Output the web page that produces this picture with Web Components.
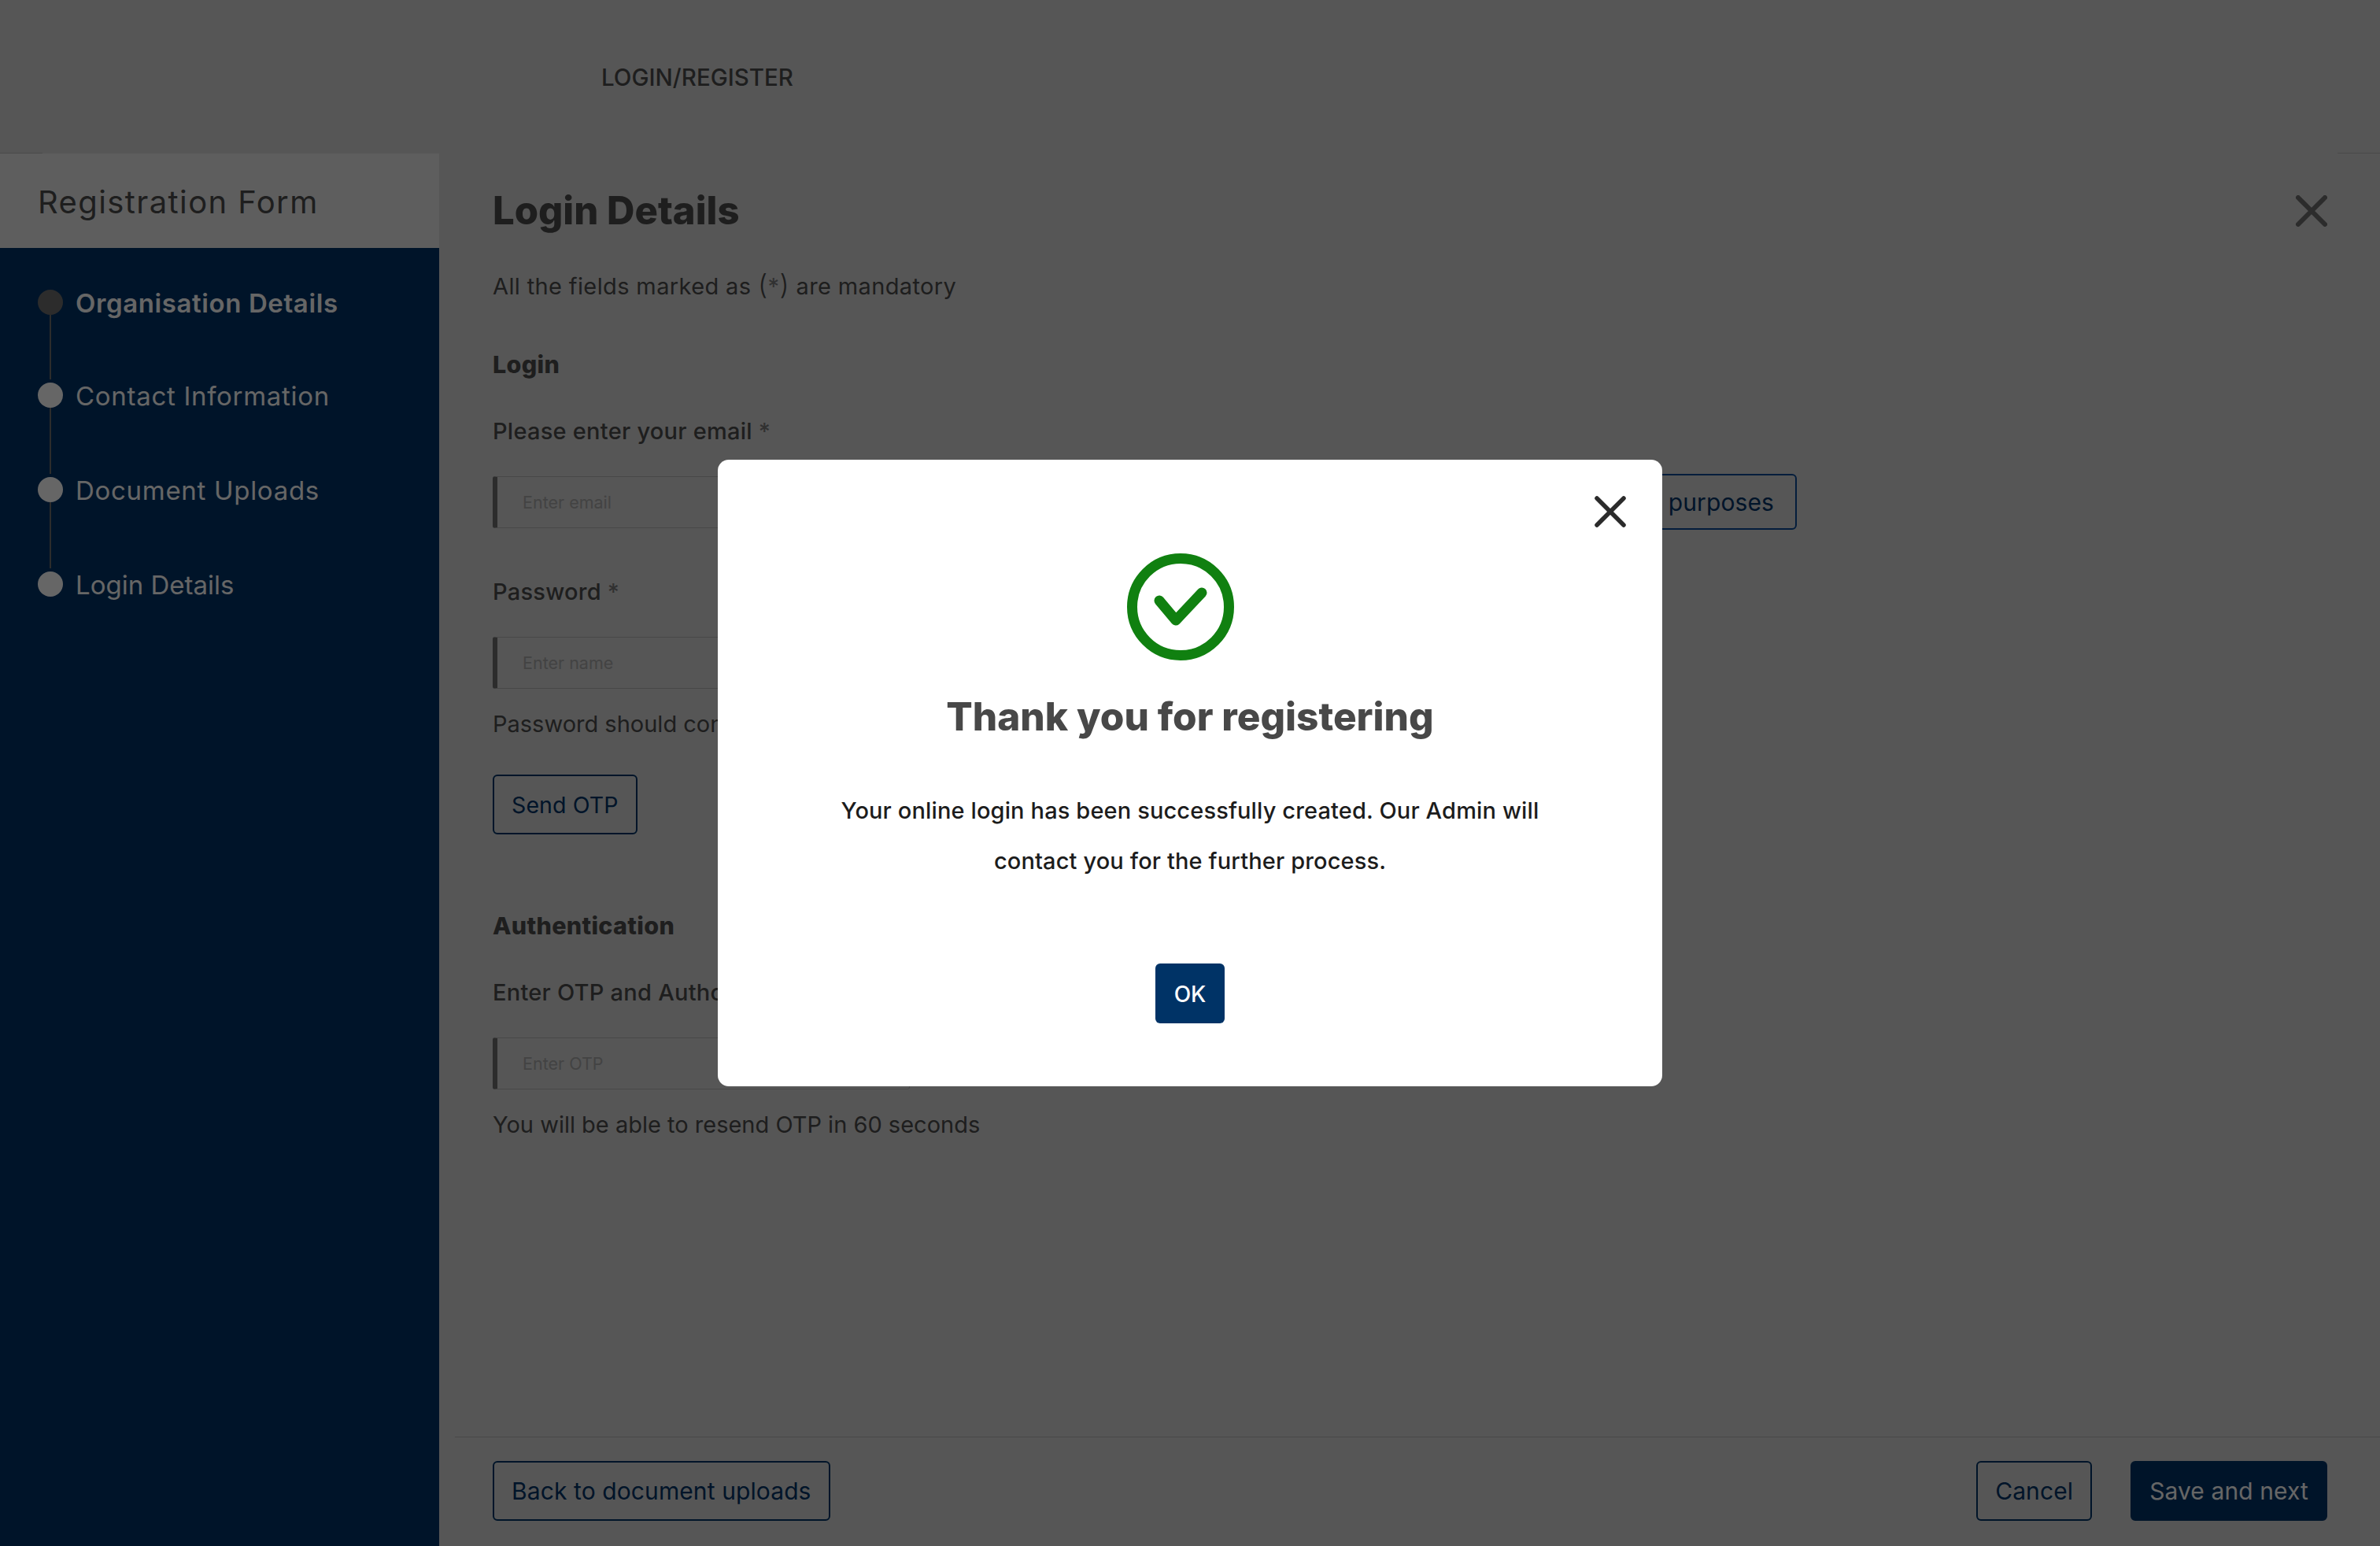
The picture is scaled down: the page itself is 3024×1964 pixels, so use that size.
<!DOCTYPE html>
<html lang="en">
<head>
<meta charset="utf-8">
<title>Registration Form</title>
<style>
  html, body { margin: 0; height: 100%; background: #d6d6d6; }
  body { font-family: "Inter", "Liberation Sans", sans-serif; color: #4c4c4c; overflow: hidden; }
</style>
</head>
<body>
<registration-page></registration-page>

<script>
const FONT = `"Inter", "Liberation Sans", sans-serif`;

class AppHeader extends HTMLElement {
    constructor() {
        super();
        this.attachShadow({ mode: 'open' }).innerHTML = `
        <style>
            :host {
                display: flex;
                align-items: center;
                box-sizing: border-box;
                height: 195px;
                padding: 0 0 0 764px;
                background: linear-gradient(to right, #b9b9b9 54px, transparent 54px, transparent 2970px, #b9b9b9 2970px) bottom / 100% 1px no-repeat;
                font: 500 29.5px ${FONT};
                color: #4c4c4c;
            }
        </style>
        <slot></slot>`;
    }
}

class SideStep extends HTMLElement {
    constructor() {
        super();
        this.attachShadow({ mode: 'open' }).innerHTML = `
        <style>
            :host {
                display: grid;
                grid-template-columns: 32px 1fr;
                column-gap: 16px;
                height: 120px;
                font: 400 33px/32px ${FONT};
                letter-spacing: 0.7px;
                color: #fff;
            }
            :host(:first-of-type) { height: 118px; }
            :host(:last-of-type) { letter-spacing: 0; }
            :host([active]) { font-weight: 600; letter-spacing: 0.6px; }
            .marker { display: flex; flex-direction: column; align-items: center; }
            .dot { width: 32px; height: 32px; flex: none; border-radius: 50%; background: #fff; }
            :host([active]) .dot { background: #6e6e6e; }
            .line { width: 2px; flex: 1; margin-bottom: 4px; background: #6e6e6e; }
            :host(:last-of-type) .line { display: none; }
            .text { padding-top: 1px; }
        </style>
        <div class="marker"><div class="dot"></div><div class="line"></div></div>
        <div class="text"><slot></slot></div>`;
    }
}

class SideNav extends HTMLElement {
    constructor() {
        super();
        this.attachShadow({ mode: 'open' }).innerHTML = `
        <style>
            :host {
                display: flex;
                flex-direction: column;
                flex: none;
                width: 558px;
                background: #003366;
            }
            .head {
                display: flex;
                align-items: center;
                box-sizing: border-box;
                height: 120px;
                padding: 2px 0 0 48px;
                background: #ececec;
                font: 400 40px ${FONT};
                letter-spacing: 1.4px;
                color: #4c4c4c;
            }
            .steps { padding: 53px 48px 0; }
        </style>
        <div class="head">Registration Form</div>
        <div class="steps"><slot></slot></div>`;
    }
}

class AppButton extends HTMLElement {
    constructor() {
        super();
        this.attachShadow({ mode: 'open' }).innerHTML = `
        <style>
            :host {
                display: inline-flex;
                align-items: center;
                justify-content: center;
                box-sizing: border-box;
                height: 76px;
                padding: 0 22px;
                border: 2px solid #003366;
                border-radius: 6px;
                font: 400 30px ${FONT};
                letter-spacing: 0.1px;
                color: #003366;
            }
            :host([primary]) { background: #003366; color: #fff; }
            :host([tall]) { height: 71px; padding: 0 27px; border-color: #0a4a96; }
        </style>
        <slot></slot>`;
    }
}

class TextInput extends HTMLElement {
    constructor() {
        super();
        this.attachShadow({ mode: 'open' }).innerHTML = `
        <style>
            :host {
                display: flex;
                align-items: center;
                box-sizing: border-box;
                width: 530px;
                height: 66px;
                padding-left: 32px;
                border: 1px solid #b4b4b4;
                border-left: 6px solid #6e6e6e;
                border-radius: 3px;
                font: 400 21.5px ${FONT};
                color: #a8a8a8;
            }
        </style>
        <slot></slot>`;
    }
}

class LoginForm extends HTMLElement {
    constructor() {
        super();
        this.attachShadow({ mode: 'open' }).innerHTML = `
        <style>
            :host {
                display: flex;
                flex-direction: column;
                flex: 1;
                box-sizing: border-box;
                padding: 48px 67px 0 68px;
                font: 400 29px/40px ${FONT};
                color: #4c4c4c;
            }
            h1 { margin: 0; font: 800 49px/50px ${FONT}; }
            h2 { margin: 0; font: 800 30.5px/40px ${FONT}; letter-spacing: 0.3px; }
            p { margin: 0; }
            .title { display: flex; justify-content: space-between; align-items: center; }
            .title svg { display: block; }
            .label { font-weight: 500; letter-spacing: 0.25px; }
            .row { display: flex; justify-content: space-between; align-items: center; width: 1657px; }
            .foot {
                display: flex;
                justify-content: space-between;
                margin: auto -67px 0 -48px;
                padding: 30px 67px 32px 48px;
                border-top: 1px solid #b4b4b4;
            }
            .foot div { display: flex; gap: 49px; }
            .mark { color: #7a7a7a; }
            .paren { font-size: 35px; font-weight: 300; line-height: 0; }
        </style>
        <div class="title">
            <h1>Login Details</h1>
            <svg width="40" height="40" viewBox="0 0 40 40" fill="none" stroke="#6e6e6e" stroke-width="6" stroke-linecap="round"><path d="M3 3 37 37M37 3 3 37"/></svg>
        </div>
        <p style="margin-top:51px;letter-spacing:0.37px">All the fields marked as <span class="paren">(</span><span class="mark">*</span><span class="paren">)</span> are mandatory</p>
        <h2 style="margin-top:59px">Login</h2>
        <p class="label" style="margin-top:45px">Please enter your email <span class="mark">*</span></p>
        <div class="row" style="margin-top:34px">
            <text-input>Enter email</text-input>
            <app-button tall>Login purposes</app-button>
        </div>
        <p class="label" style="margin-top:59px">Password <span class="mark">*</span></p>
        <text-input style="margin-top:37px">Enter name</text-input>
        <p style="margin-top:25px">Password should contain at least 8 characters</p>
        <div style="margin-top:44px"><app-button style="font-size:28.5px">Send OTP</app-button></div>
        <h2 style="margin-top:96px">Authentication</h2>
        <p class="label" style="margin-top:45px">Enter OTP and Authorize</p>
        <text-input style="margin-top:37px">Enter OTP</text-input>
        <p style="margin-top:25px">You will be able to resend OTP in 60 seconds</p>
        <div class="foot">
            <app-button>Back to document uploads</app-button>
            <div>
                <app-button>Cancel</app-button>
                <app-button primary>Save and next</app-button>
            </div>
        </div>`;
    }
}

class SuccessModal extends HTMLElement {
    constructor() {
        super();
        this.attachShadow({ mode: 'open' }).innerHTML = `
        <style>
            :host {
                position: fixed;
                inset: 0;
                display: flex;
                align-items: center;
                justify-content: center;
                background: rgba(0, 0, 0, 0.6);
            }
            .box {
                position: relative;
                display: flex;
                flex-direction: column;
                align-items: center;
                box-sizing: border-box;
                width: 1200px;
                height: 796px;
                padding-top: 119px;
                border-radius: 14px;
                background: #fff;
            }
            .close { position: absolute; top: 46px; right: 46px; display: block; }
            .check { display: block; margin-left: -24px; }
            h3 { margin: 41px 0 0; font: 800 49.5px/60px ${FONT}; color: #484848; }
            p { margin: 58px 0 0; text-align: center; font: 500 29px/64px ${FONT}; letter-spacing: 0.13px; color: #1c1c1c; }
            .ok {
                display: flex;
                align-items: center;
                justify-content: center;
                box-sizing: border-box;
                width: 88px;
                height: 76px;
                margin-top: 98px;
                padding-top: 2px;
                border-radius: 6px;
                background: #003366;
                color: #fff;
                font: 500 28px ${FONT};
            }
        </style>
        <div class="box">
            <svg class="close" width="40" height="40" viewBox="0 0 40 40" fill="none" stroke="#2b2b2b" stroke-width="5.5" stroke-linecap="round"><path d="M3 3 37 37M37 3 3 37"/></svg>
            <svg class="check" width="136" height="136" viewBox="0 0 136 136" fill="none" stroke="#108010"><circle cx="68" cy="68" r="61.5" stroke-width="13"/><path d="M41 60 62 85 95 50" stroke-width="13" stroke-linecap="round" stroke-linejoin="round"/></svg>
            <h3>Thank you for registering</h3>
            <p>Your online login has been successfully created. Our Admin will<br>contact you for the further process.</p>
            <div class="ok">OK</div>
        </div>`;
    }
}

class RegistrationPage extends HTMLElement {
    constructor() {
        super();
        this.attachShadow({ mode: 'open' }).innerHTML = `
        <style>
            :host { display: flex; flex-direction: column; height: 1964px; }
            .body { display: flex; flex: 1; min-height: 0; }
        </style>
        <app-header>LOGIN/REGISTER</app-header>
        <div class="body">
            <side-nav>
                <side-step active>Organisation Details</side-step>
                <side-step>Contact Information</side-step>
                <side-step>Document Uploads</side-step>
                <side-step>Login Details</side-step>
            </side-nav>
            <login-form></login-form>
        </div>
        <success-modal></success-modal>`;
    }
}

customElements.define('app-header', AppHeader);
customElements.define('side-step', SideStep);
customElements.define('side-nav', SideNav);
customElements.define('app-button', AppButton);
customElements.define('text-input', TextInput);
customElements.define('login-form', LoginForm);
customElements.define('success-modal', SuccessModal);
customElements.define('registration-page', RegistrationPage);
</script>
</body>
</html>
